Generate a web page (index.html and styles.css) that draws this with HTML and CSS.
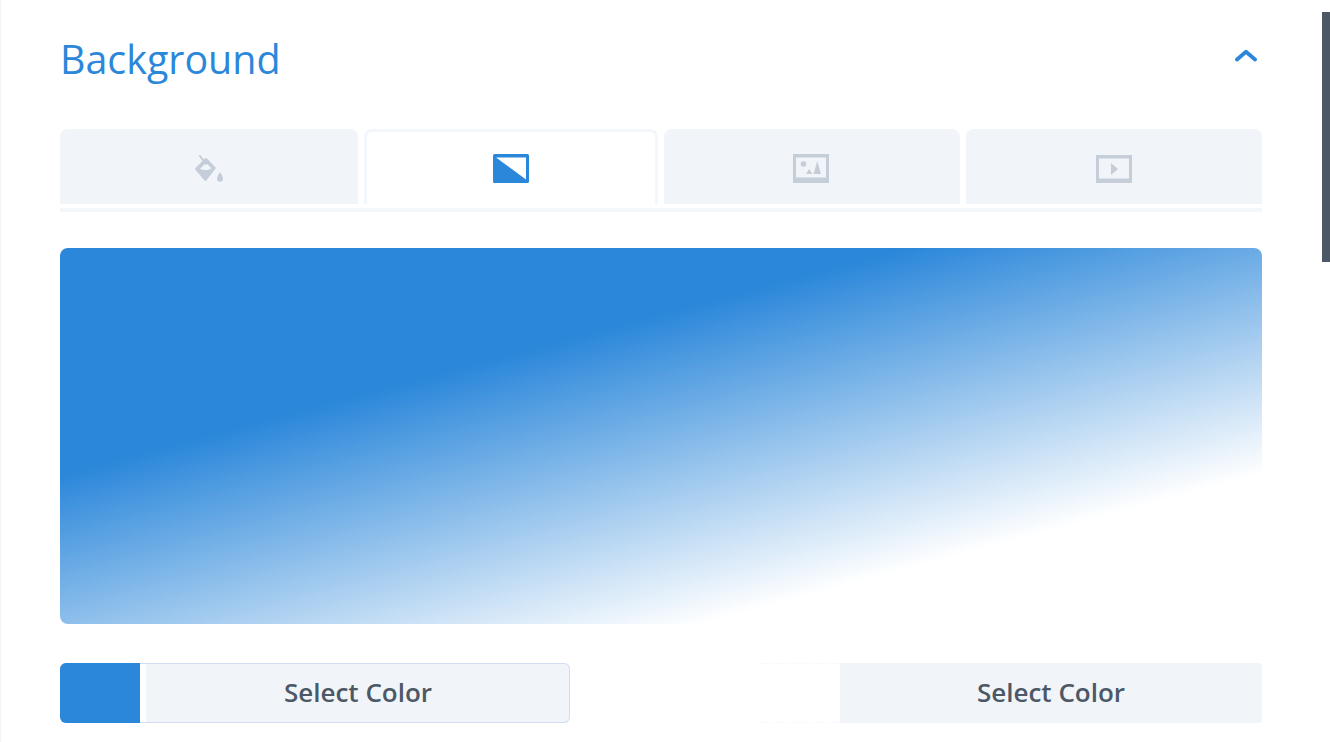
FILE: index.html
```html
<!DOCTYPE html>
<html lang="en">
<head>
<meta charset="utf-8">
<title>Background</title>
<link rel="stylesheet" href="styles.css">
</head>
<body>
<main class="panel">
  <header class="head">
    <h1 class="title">Background</h1>
    <svg class="chevron" viewBox="0 0 22 13" width="22" height="13" aria-hidden="true"><path d="M2 10.500 11 2.800l9 7.700" fill="none" stroke="currentColor" stroke-width="3.800" stroke-linecap="round" stroke-linejoin="round"/></svg>
  </header>
  <div class="tabs">
    <button class="tab" type="button">
      <svg class="icon" width="28" height="28" viewBox="0 0 28 28" aria-hidden="true"><path fill-rule="evenodd" d="M1 12.500 10 3.500a1.500 1.500 0 0 1 2 0l9 9.500-9.500 12.300a1.500 1.500 0 0 1-2.200 0L1 15.500a2 2 0 0 1 0-3zM5 13.800c2 1.600 9 1.800 11.500-.6L11 7.700z"/><path d="M3.500.6 5.300 0l7 8.700-1.800 1.500z"/><path d="M25 17c1.600 2.700 3 4.800 3 6.800a3 3 0 0 1-6 0c0-2 1.400-4.100 3-6.800z"/></svg>
    </button>
    <button class="tab tab-active" type="button">
      <svg width="36" height="29" viewBox="0 0 36 29" aria-hidden="true"><rect width="36" height="29" rx="1.500" fill="#2b87da"/><path d="M3 3.500h30v22z" fill="#fff"/></svg>
    </button>
    <button class="tab tab-image" type="button">
      <svg class="icon" width="36" height="29" viewBox="0 0 36 29" aria-hidden="true"><path fill-rule="evenodd" d="M0 0h36v29H0zM3 3.500v20h30v-20z"/><circle cx="10.500" cy="10" r="2.800"/><path d="M13 20l3.200-5 3.200 5zM20.500 20l3.800-13L28 20z"/></svg>
    </button>
    <button class="tab" type="button">
      <svg class="icon" width="36" height="28" viewBox="0 0 36 28" aria-hidden="true"><path fill-rule="evenodd" d="M0 0h36v28H0zM3 3.500v20h30v-20z"/><path d="M15 8l7 6-7 6z"/></svg>
    </button>
  </div>
  <div class="preview"></div>
  <div class="colors">
    <button class="picker picker-start" type="button"><span class="swatch swatch-blue"></span><span class="gap"></span><span class="label">Select Color</span></button>
    <button class="picker picker-end" type="button"><span class="swatch swatch-empty"></span><span class="label">Select Color</span></button>
  </div>
</main>
<div class="thumb"></div>
</body>
</html>
```
FILE: styles.css
```css
* { box-sizing: border-box; }
html, body { margin: 0; height: 100%; }
body {
  background: #fff;
  overflow: hidden;
  font-family: "Open Sans", "Noto Sans", sans-serif;
}
.panel {
  height: 742px;
  padding: 0 68px 0 59px;
  border-left: 1px solid #f3f4f6;
}
.head {
  height: 129px;
  display: flex;
  justify-content: space-between;
  align-items: flex-start;
}
.title {
  margin: 34px 0 0 0;
  font-size: 39.4px;
  font-weight: 400;
  line-height: 50px;
  color: #2b87da;
}
.chevron {
  margin: 49px 5px 0 0;
  color: #2b87da;
}
.tabs {
  display: grid;
  grid-template-columns: 298px 294px 296px 296px;
  gap: 6px;
  height: 83px;
  padding-bottom: 4px;
  border-bottom: 4px solid #f3f6fa;
}
.tab {
  border: 0;
  padding: 4px 0 0;
  background: #f1f5f9;
  border-radius: 8px 8px 0 0;
  display: flex;
  align-items: center;
  justify-content: center;
}
.tab-active {
  background: #fff;
  padding-top: 1px;
  border: 3px solid #f3f6fa;
  border-bottom: 0;
}
.tab-image svg { margin-right: 2px; }
.icon { fill: #c5cdd8; }
.preview {
  height: 376px;
  margin-top: 36px;
  border-radius: 8px;
  background: linear-gradient(165deg, #2b87da 32.5%, #fff 78.5%);
}
.colors {
  display: flex;
  justify-content: space-between;
  margin-top: 39px;
}
.picker {
  display: flex;
  height: 60px;
  padding: 0;
  border: 0;
  background: #f1f5f9;
  border-radius: 6px;
  overflow: hidden;
  font: inherit;
}
.picker-start {
  width: 510px;
  box-shadow: inset 0 0 0 1px #cfdff0;
}
.picker-end { width: 502px; border-radius: 0 4px 4px 0; }
.swatch {
  width: 80px;
  flex: none;
  background: #fff;
}
.swatch-blue { background: #2b87da; }
.swatch-empty {
  border-top: 1px dashed #f6f8fb;
  border-bottom: 1px dashed #f6f8fb;
}
.gap {
  width: 6px;
  flex: none;
  background: #fff;
  border-top: 1px solid #cfdff0;
  border-bottom: 1px solid #cfdff0;
}
.label {
  flex: 1;
  align-self: flex-start;
  text-align: center;
  font-size: 26px;
  font-weight: 560;
  line-height: 59px;
  color: #4c5866;
}
.thumb {
  position: absolute;
  top: 12px;
  left: 1322px;
  width: 8px;
  height: 250px;
  background: #4c5866;
}
```
